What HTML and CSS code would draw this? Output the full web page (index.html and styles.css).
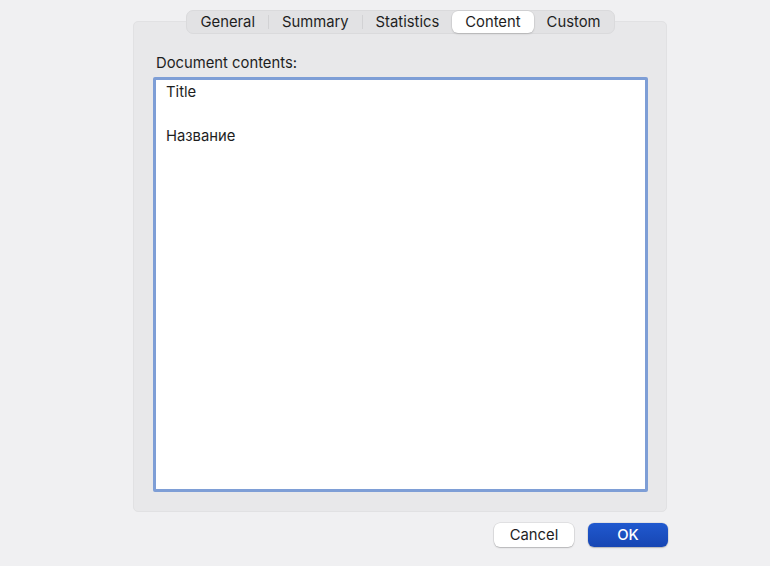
FILE: index.html
```html
<!DOCTYPE html>
<html lang="en">
<head>
    <meta charset="UTF-8">
    <title>Document Properties</title>
    <link rel="stylesheet" href="styles.css">
</head>
<body>
    <div class="dialog">
        <div class="tabs">
            <div class="tab">General</div>
            <div class="sep"></div>
            <div class="tab">Summary</div>
            <div class="sep"></div>
            <div class="tab">Statistics</div>
            <div class="tab active">Content</div>
            <div class="tab">Custom</div>
        </div>

        <div class="panel">
            <label class="field-label">Document contents:</label>
            <div class="contents">
                <div class="line">Title</div>
                <div class="line"></div>
                <div class="line">Название</div>
            </div>
        </div>

        <div class="buttons">
            <button class="btn">Cancel</button>
            <button class="btn btn-primary">OK</button>
        </div>
    </div>
</body>
</html>
```

FILE: styles.css
```css
* {
    margin: 0;
    padding: 0;
    box-sizing: border-box;
}

body {
    font-family: Inter, 'Liberation Sans', 'Noto Sans', sans-serif;
    font-size: 14.8px;
    color: #1e1e1e;
    background: #f0f0f2;
    width: 770px;
    height: 566px;
    overflow: hidden;
}

.dialog {
    width: 535px;
    margin-left: 133px;
    padding-top: 10px;
    display: flex;
    flex-direction: column;
}

.tabs {
    align-self: center;
    position: relative;
    z-index: 1;
    display: flex;
    align-items: center;
    height: 24px;
    padding: 0 1px;
    background: #e2e2e4;
    border: 1px solid #dadadc;
    border-radius: 7px;
    margin-bottom: -13px;
}

.tab {
    height: 22px;
    line-height: 22px;
    padding: 0 13px;
    font-size: 14.8px;
    color: #1e1e1e;
    border-radius: 6px;
}

.tab.active {
    background: #fff;
    box-shadow: 0 0 0 0.5px rgba(0, 0, 0, 0.08), 0 1px 2px rgba(0, 0, 0, 0.15);
}

.sep {
    width: 1px;
    height: 14px;
    background: #d2d2d4;
}

.panel {
    height: 491px;
    margin-right: 1px;
    background: #e8e8ea;
    border: 1px solid #e1e1e3;
    border-radius: 5px;
    padding: 32px 18px 19px 19px;
    display: flex;
    flex-direction: column;
}

.field-label {
    font-size: 14.8px;
    color: #1e1e1e;
    padding-left: 3px;
    line-height: 18px;
    margin-bottom: 5px;
}

.contents {
    flex: 1;
    background: #fff;
    border: 3px solid #7e9ed6;
    border-radius: 2px;
    padding: 1px 10px 0;
}

.line {
    height: 22px;
    line-height: 22px;
    font-size: 14.8px;
    color: #1e1e1e;
}

.buttons {
    display: flex;
    justify-content: flex-end;
    gap: 14px;
    margin-top: 11px;
}

.btn {
    width: 80px;
    height: 24px;
    font-family: inherit;
    font-size: 14.8px;
    color: #1e1e1e;
    background: #fff;
    border: none;
    border-radius: 6px;
    box-shadow: 0 0 0 0.5px rgba(0, 0, 0, 0.12), 0 1px 1.5px rgba(0, 0, 0, 0.2);
}

.btn-primary {
    color: #fff;
    font-weight: 500;
    background: linear-gradient(#2059cf, #1746b3);
    box-shadow: 0 0 0 0.5px rgba(0, 0, 0, 0.1), 0 1px 1.5px rgba(0, 0, 0, 0.2);
}
```
